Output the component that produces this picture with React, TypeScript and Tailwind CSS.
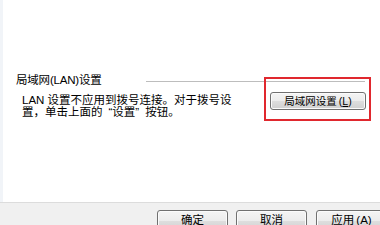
const winBtn =
  "flex items-center justify-center border border-[#707070] rounded-[3px] bg-[linear-gradient(to_bottom,#f4f4f4_0%,#ececec_50%,#dedede_50%,#d0d0d0_100%)] shadow-[inset_0_0_0_1px_#fbfbfb] text-black";

export default function App() {
  return (
    <div className="relative w-[380px] h-[225px] overflow-hidden bg-white flex flex-col font-['Liberation_Sans','Noto_Sans_CJK_SC',sans-serif] text-black">
      {/* main white pane */}
      <div className="flex-1 border-l-[3px] border-[#f1f4f8]">
        {/* group header */}
        <div className="mt-[74px] h-[14px] flex items-center pl-[13px] pr-[15px]">
          <span className="text-[11.5px] leading-none tracking-[-0.2px]">局域网(LAN)设置</span>
          <div className="ml-[44px] flex-1 h-px bg-[#bdbdbd]" />
        </div>

        <div className="mt-[4px] flex items-start pr-[14px]">
          <p className="pl-[19px] pt-[2px] text-[11.5px] leading-[12px]">
            LAN 设置不应用到拨号连接。对于拨号设
            <br />
            置，单击上面的<span className="ml-[6px]">“</span>设置<span className="mr-[6px]">”</span>按钮。
          </p>
          <button className={`${winBtn} ml-auto w-[96px] h-[18px] text-[10.5px] leading-none`}>
            局域网设置<span className="ml-[2px]">(<span className="underline">L</span>)</span>
          </button>
        </div>
      </div>

      {/* bottom button bar */}
      <div className="h-[23px] bg-[#f0f0f0] border-t border-[#dcdcdc] flex items-start pl-[157px] pt-[7px] gap-[8px]">
        <button className={`${winBtn} shrink-0 w-[71px] h-[22px] text-[11.5px] leading-none`}>确定</button>
        <button className={`${winBtn} shrink-0 w-[71px] h-[22px] text-[11.5px] leading-none`}>取消</button>
        <button className={`${winBtn} shrink-0 w-[71px] h-[22px] text-[11.5px] leading-none ml-[1px]`}>
          应用<span className="ml-[2px]">(<span className="underline">A</span>)</span>
        </button>
      </div>

      {/* red annotation box */}
      <div className="absolute left-[264px] top-[77px] w-[107px] h-[44px] border-2 border-[#e0282e]" />
    </div>
  );
}
